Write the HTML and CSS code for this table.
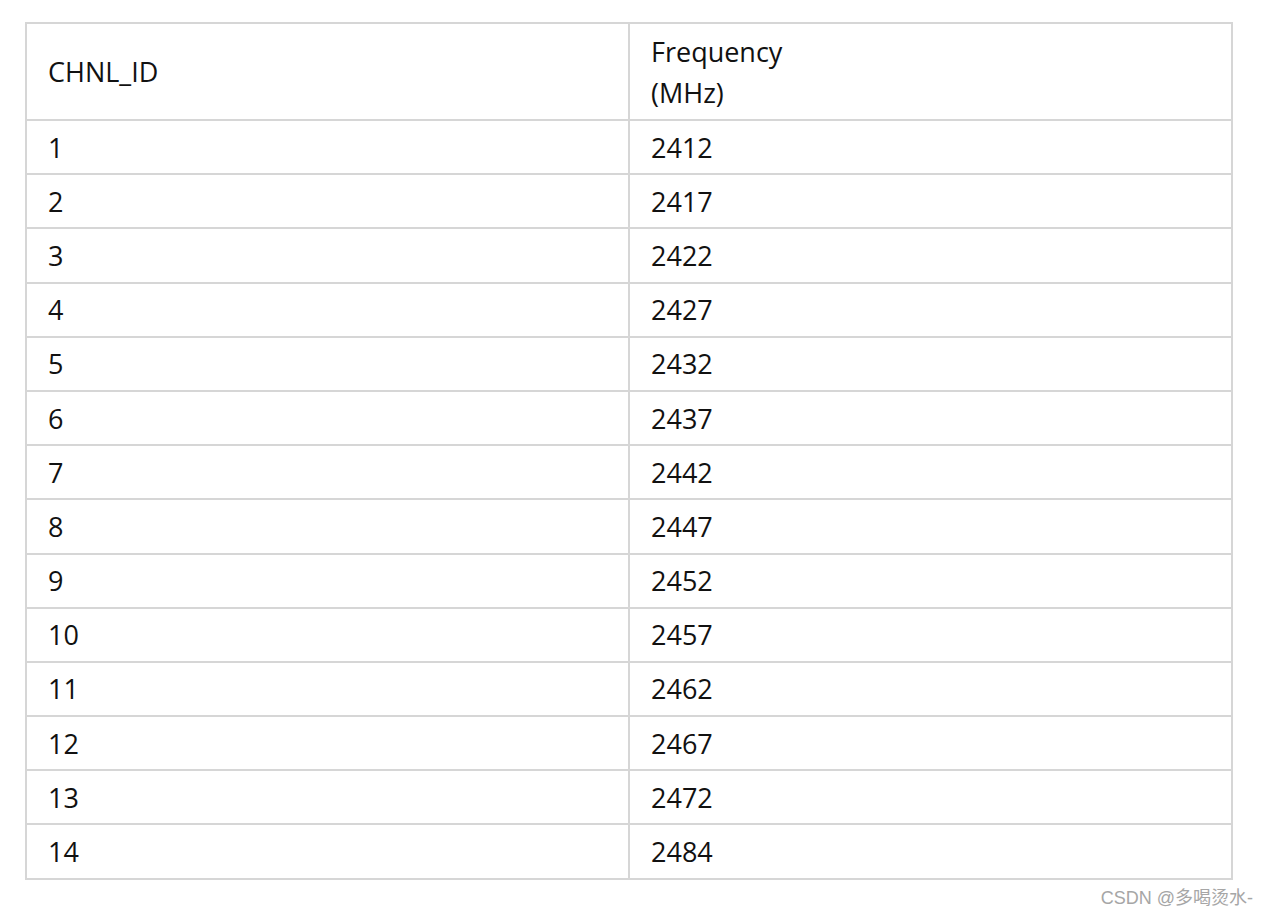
FILE: index.html
```html
<!DOCTYPE html>
<html lang="zh">
<head>
<meta charset="utf-8">
<title>CHNL_ID Frequency</title>
<link rel="stylesheet" href="styles.css">
</head>
<body>
<div class="page">
  <table class="freq">
    <thead>
      <tr class="head">
        <td>CHNL_ID</td>
        <td>Frequency<br>(MHz)</td>
      </tr>
    </thead>
    <tbody>
      <tr><td>1</td><td>2412</td></tr>
      <tr><td>2</td><td>2417</td></tr>
      <tr><td>3</td><td>2422</td></tr>
      <tr><td>4</td><td>2427</td></tr>
      <tr><td>5</td><td>2432</td></tr>
      <tr><td>6</td><td>2437</td></tr>
      <tr><td>7</td><td>2442</td></tr>
      <tr><td>8</td><td>2447</td></tr>
      <tr><td>9</td><td>2452</td></tr>
      <tr><td>10</td><td>2457</td></tr>
      <tr><td>11</td><td>2462</td></tr>
      <tr><td>12</td><td>2467</td></tr>
      <tr><td>13</td><td>2472</td></tr>
      <tr><td>14</td><td>2484</td></tr>
    </tbody>
  </table>
  <div class="watermark">CSDN @多喝烫水-</div>
</div>
</body>
</html>
```
FILE: styles.css
```css
html, body {
  margin: 0;
  padding: 0;
  background: #ffffff;
}
.page {
  position: relative;
  width: 1267px;
  height: 914px;
  padding: 22px 0 0 25px;
  box-sizing: border-box;
}
.freq {
  width: 1208px;
  border-collapse: collapse;
  table-layout: fixed;
  font-family: "Open Sans", "Noto Sans", sans-serif;
  font-size: 27px;
  color: #111111;
}
.freq td {
  border: 2px solid #d6d6d6;
  padding: 0 21px;
  vertical-align: middle;
  line-height: 39px;
  width: 50%;
}
.freq tbody tr {
  height: 54.2px;
}
.freq tr.head {
  height: 97px;
}
.freq tr.head td {
  line-height: 41px;
}
.watermark {
  position: absolute;
  right: 14px;
  top: 883px;
  font-family: "Liberation Sans", "Noto Sans CJK SC", sans-serif;
  font-size: 18px;
  color: #a6a6a6;
  white-space: nowrap;
}
```
